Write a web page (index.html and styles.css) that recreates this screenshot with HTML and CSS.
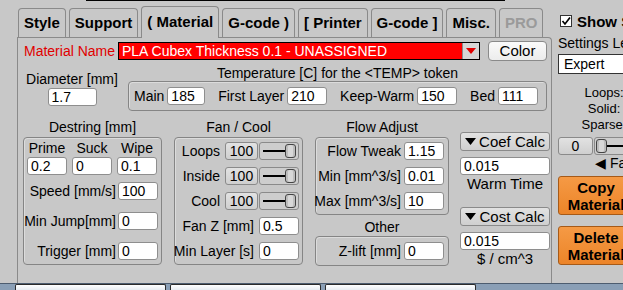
FILE: index.html
```html
<!DOCTYPE html>
<html lang="en">
<head>
    <meta charset="UTF-8">
    <title>Material</title>
    <link rel="stylesheet" href="styles.css">
</head>
<body>
    <div class="topline"></div>
    <div class="window">
        <div class="main">
            <div class="tabs">
                <div class="tab">Style</div>
                <div class="tab">Support</div>
                <div class="tab active">( Material</div>
                <div class="tab">G-code )</div>
                <div class="tab">[ Printer</div>
                <div class="tab">G-code ]</div>
                <div class="tab">Misc.</div>
                <div class="tab disabled">PRO</div>
            </div>
            <div class="panel">
                <div class="name_row">
                    <span class="name_label">Material Name</span>
                    <div class="name_select">
                        <span class="name_text">PLA Cubex Thickness 0.1 - UNASSIGNED</span>
                        <span class="drop">
                            <svg width="10" height="6" viewBox="0 0 10 6"><polygon points="0,0 10,0 5,6" fill="#e00000"/></svg>
                        </span>
                    </div>
                    <div class="btn color_btn">Color</div>
                </div>

                <div class="temp_row">
                    <div class="diameter">
                        <div class="dia_label">Diameter [mm]</div>
                        <input class="field dia_field" value="1.7">
                    </div>
                    <div class="temp">
                        <div class="temp_title">Temperature [C] for the &lt;TEMP&gt; token</div>
                        <div class="box temp_box">
                            <div class="pair"><span>Main</span><input class="field t38" value="185"></div>
                            <div class="pair"><span>First Layer</span><input class="field" value="210"></div>
                            <div class="pair"><span>Keep-Warm</span><input class="field" value="150"></div>
                            <div class="pair"><span>Bed</span><input class="field" value="111"></div>
                        </div>
                    </div>
                </div>

                <div class="groups">
                    <div class="col destring">
                        <div class="group_title">Destring [mm]</div>
                        <div class="box destring_box">
                            <div class="trio heads">
                                <span>Prime</span><span>Suck</span><span>Wipe</span>
                            </div>
                            <div class="trio">
                                <input class="field" value="0.2">
                                <input class="field" value="0">
                                <input class="field" value="0.1">
                            </div>
                            <div class="row speed"><span>Speed [mm/s]</span><input class="field" value="100"></div>
                            <div class="row spaced"><span>Min Jump[mm]</span><input class="field" value="0"></div>
                            <div class="row spaced"><span>Trigger [mm]</span><input class="field" value="0"></div>
                        </div>
                    </div>

                    <div class="col fan">
                        <div class="group_title">Fan / Cool</div>
                        <div class="box fan_box">
                            <div class="row"><span>Loops</span><div class="btn small_btn">100</div><div class="slider"><div class="track"></div><div class="thumb"></div></div></div>
                            <div class="row"><span>Inside</span><div class="btn small_btn">100</div><div class="slider"><div class="track"></div><div class="thumb"></div></div></div>
                            <div class="row"><span>Cool</span><div class="btn small_btn">100</div><div class="slider"><div class="track"></div><div class="thumb"></div></div></div>
                            <div class="row"><span>Fan Z [mm]</span><input class="field" value="0.5"></div>
                            <div class="row"><span>Min Layer [s]</span><input class="field" value="0"></div>
                        </div>
                    </div>

                    <div class="col flow">
                        <div class="group_title">Flow Adjust</div>
                        <div class="box flow_box">
                            <div class="row"><span>Flow Tweak</span><input class="field" value="1.15"></div>
                            <div class="row"><span>Min [mm^3/s]</span><input class="field" value="0.01"></div>
                            <div class="row"><span>Max [mm^3/s]</span><input class="field" value="10"></div>
                        </div>
                        <div class="group_title other_title">Other</div>
                        <div class="box other_box">
                            <div class="row"><span>Z-lift [mm]</span><input class="field" value="0"></div>
                        </div>
                    </div>

                    <div class="col calc">
                        <div class="btn calc_btn">
                            <svg width="11" height="7" viewBox="0 0 11 7"><polygon points="0,0 11,0 5.5,7" fill="#000"/></svg>
                            <span>Coef Calc</span>
                        </div>
                        <input class="field calc_field" value="0.015">
                        <div class="caption">Warm Time</div>
                        <div class="btn calc_btn cost_btn">
                            <svg width="11" height="7" viewBox="0 0 11 7"><polygon points="0,0 11,0 5.5,7" fill="#000"/></svg>
                            <span>Cost Calc</span>
                        </div>
                        <input class="field calc_field" value="0.015">
                        <div class="caption">$ / cm^3</div>
                    </div>
                </div>
            </div>
        </div>

        <div class="side">
            <div class="check_row">
                <span class="checkbox">
                    <svg width="10" height="10" viewBox="0 0 10 10"><path d="M1.5 5 L4 8 L9 1.5" fill="none" stroke="#000" stroke-width="1.7"/></svg>
                </span>
                <span class="check_label">Show Settings</span>
            </div>
            <div class="level_label">Settings Level</div>
            <div class="level_select">Expert</div>
            <div class="stats">
                <div>Loops:</div>
                <div>Solid:</div>
                <div>Sparse:</div>
            </div>
            <div class="speed_row">
                <div class="btn zero_btn">0</div>
                <div class="slider side_slider"><div class="thumb"></div><div class="track"></div></div>
            </div>
            <div class="faster">&#9664; Faster</div>
            <div class="orange_btn">Copy<br>Material</div>
            <div class="orange_btn delete_btn">Delete<br>Material</div>
        </div>
    </div>
    <div class="bottom">
        <div class="btab"></div>
        <div class="btab"></div>
        <div class="btab"></div>
    </div>
</body>
</html>
```

FILE: styles.css
```css
body {
    margin: 0;
    width: 623px;
    height: 290px;
    overflow: hidden;
    background: #c8c8c8;
    font-family: "Liberation Sans", Arial, sans-serif;
    font-size: 14px;
    color: #000;
    white-space: nowrap;
}
.topline {
    height: 1px;
    margin-left: 86px;
    width: 419px;
    background: #000;
}
.window {
    display: flex;
    height: 282px;
}
.main {
    margin-left: 17px;
    width: 535px;
    flex: none;
    display: flex;
    flex-direction: column;
}

/* tabs */
.tabs {
    height: 36px;
    display: flex;
    align-items: flex-end;
    padding-left: 1px;
    gap: 3px;
}
.tab {
    height: 28px;
    line-height: 28px;
    padding: 0 5px;
    border: 1px solid #8a8a8a;
    border-bottom: none;
    border-radius: 4px 4px 0 0;
    font-weight: bold;
    font-size: 15px;
    background: #c8c8c8;
}
.tab.active {
    height: 31px;
    line-height: 30px;
    margin-bottom: -1px;
    position: relative;
    z-index: 1;
}
.tab.disabled {
    color: #9a9a9a;
}

.panel {
    flex: 1;
    border: 1px solid #8a8a8a;
    border-bottom: none;
    border-radius: 0 4px 0 0;
    padding: 3px 0 0 5px;
}

/* common controls */
.field {
    box-sizing: border-box;
    flex: none;
    width: 40px;
    height: 18px;
    margin: 0;
    padding: 0 3px;
    border: 1px solid #8e8e8e;
    border-radius: 3px;
    background: #fff;
    font-family: inherit;
    font-size: 14px;
    color: #000;
}
.t38 {
    width: 38px;
}
.btn {
    box-sizing: border-box;
    flex: none;
    border: 1px solid #8a8a8a;
    border-radius: 3px;
    background: linear-gradient(#e2e2e2, #cfcfcf);
    text-align: center;
}
.box {
    box-sizing: border-box;
    border: 1px solid #858585;
    border-radius: 4px;
    box-shadow: inset 1px 1px 0 #dcdcdc;
}

/* material name */
.name_row {
    display: flex;
    align-items: center;
    height: 20px;
    padding-left: 1px;
}
.name_label {
    color: #e00000;
    width: 94px;
}
.name_select {
    box-sizing: border-box;
    width: 362px;
    height: 18px;
    display: flex;
    border: 1px solid #000;
    background: #f00;
    color: #fff;
}
.name_text {
    flex: 1;
    padding-left: 3px;
    line-height: 16px;
}
.drop {
    width: 16px;
    background: #d6d6d6;
    border-left: 1px solid #8a8a8a;
    display: flex;
    align-items: center;
    justify-content: center;
}
.color_btn {
    margin-left: 8px;
    width: 59px;
    height: 20px;
    line-height: 18px;
    font-size: 15px;
    background: linear-gradient(#fafafa, #ececec);
    border-radius: 4px;
}

/* temperature */
.temp_row {
    display: flex;
    margin-top: 5px;
}
.diameter {
    width: 98px;
    padding-top: 6px;
    text-align: center;
}
.dia_label {
    line-height: 15px;
}
.dia_field {
    width: 49px;
    margin-top: 1px;
}
.temp {
    margin-left: 7px;
    width: 419px;
}
.temp_title {
    line-height: 15px;
    text-align: center;
}
.temp_box {
    height: 30px;
    display: flex;
    align-items: center;
    justify-content: space-between;
    padding: 0 8px 0 5px;
}
.pair {
    display: flex;
    align-items: center;
    gap: 3px;
}

/* groups */
.groups {
    display: flex;
    margin-top: 7px;
}
.col {
    flex: none;
}
.group_title {
    height: 19px;
    line-height: 19px;
    text-align: center;
}
.row {
    display: flex;
    justify-content: flex-end;
    align-items: center;
    height: 18px;
    gap: 2px;
}
.destring {
    width: 139px;
}
.destring_box {
    height: 128px;
    padding: 1px 3px 0 3px;
}
.trio {
    display: grid;
    grid-template-columns: 40px 40px 40px;
    gap: 5px;
    height: 18px;
}
.heads {
    text-align: center;
    line-height: 18px;
}
.speed {
    margin-top: 7px;
}
.spaced {
    margin-top: 12px;
}

.fan {
    width: 129px;
    margin-left: 12px;
}
.fan_box {
    height: 128px;
    padding: 4px 3px 0 0;
    display: flex;
    flex-direction: column;
    gap: 7px;
}
.fan_box .row span {
    margin-right: 3px;
}
.small_btn {
    width: 33px;
    height: 18px;
    line-height: 16px;
    margin-right: -1px;
}
.slider {
    box-sizing: border-box;
    flex: none;
    width: 40px;
    height: 18px;
    border: 1px solid #8a8a8a;
    border-radius: 3px;
    background: #cdcdcd;
    display: flex;
    align-items: center;
    padding: 0 2px 0 3px;
}
.track {
    flex: 1;
    height: 2px;
    background: #000;
}
.thumb {
    box-sizing: border-box;
    width: 11px;
    height: 14px;
    border: 1px solid #444;
    border-radius: 3px;
    background: #d8d8d8;
    box-shadow: inset 2px 0 0 #bdbdbd, inset -2px 0 0 #bdbdbd;
}

.flow {
    width: 134px;
    margin-left: 12px;
}
.flow_box {
    height: 78px;
    padding: 4px 4px 0 0;
    display: flex;
    flex-direction: column;
    gap: 7px;
}
.other_title {
    height: 18px;
    line-height: 18px;
    padding-top: 3px;
}
.other_box {
    height: 30px;
    padding: 5px 4px 0 0;
}
.flow .row {
    gap: 3px;
}

.calc {
    width: 90px;
    margin-left: 11px;
    padding-top: 14px;
}
.calc_btn {
    height: 19px;
    display: flex;
    align-items: center;
    justify-content: center;
    gap: 3px;
    font-size: 15px;
}
.cost_btn {
    margin-top: 14px;
}
.calc_field {
    width: 90px;
    margin-top: 6px;
    display: block;
}
.caption {
    line-height: 18px;
    text-align: center;
    font-size: 15px;
}

/* side column */
.side {
    width: 92px;
    flex: none;
    padding: 12px 0 0 6px;
}
.check_row {
    display: flex;
    align-items: center;
    height: 16px;
}
.checkbox {
    box-sizing: border-box;
    width: 12px;
    height: 12px;
    margin-left: 2px;
    border: 1px solid #333;
    background: #fff;
    display: flex;
    align-items: center;
    justify-content: center;
}
.check_label {
    margin-left: 5px;
    font-weight: bold;
    font-size: 15px;
}
.level_label {
    margin-top: 6px;
    line-height: 16px;
    font-size: 14px;
}
.level_select {
    box-sizing: border-box;
    margin-top: 3px;
    height: 20px;
    line-height: 18px;
    padding-left: 5px;
    border: 1px solid #333;
    border-right: none;
    background: #fff;
    font-size: 14px;
}
.stats {
    margin-top: 11px;
    text-align: center;
    line-height: 16px;
    font-size: 13px;
}
.speed_row {
    display: flex;
    margin-top: 4px;
    gap: 1px;
}
.zero_btn {
    width: 35px;
    height: 18px;
    line-height: 16px;
}
.side_slider {
    width: 60px;
    padding: 0 0 0 1px;
}
.faster {
    padding-left: 37px;
    line-height: 16px;
    font-size: 14px;
}
.orange_btn {
    box-sizing: border-box;
    width: 76px;
    height: 39px;
    margin-top: 5px;
    border: 1px solid #a65a18;
    border-radius: 3px;
    background: linear-gradient(#f59a45, #ec8428);
    font-weight: bold;
    font-size: 15px;
    line-height: 17px;
    text-align: center;
    padding-top: 2px;
}
.delete_btn {
    margin-top: 11px;
}

/* bottom strip */
.bottom {
    height: 7px;
    display: flex;
    gap: 4px;
    padding-left: 15px;
    background: #8a9fb6;
    border-top: 1px solid #4d5d70;
}
.btab {
    box-sizing: border-box;
    width: 151px;
    border: 1px solid #2b2b2b;
    border-bottom: none;
    border-radius: 2px 2px 0 0;
    background: linear-gradient(#ffffff, #e2e8ef);
}
```
